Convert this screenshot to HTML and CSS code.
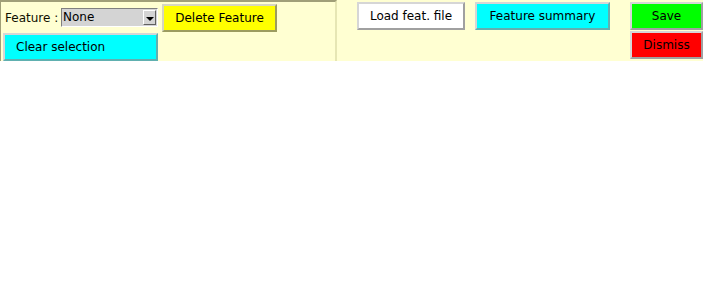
FILE: index.html
```html
<!DOCTYPE html>
<html>
<head>
<meta charset="utf-8">
<link rel="stylesheet" href="styles.css">
</head>
<body>
<div class="toolbar">
  <div class="panel">
    <div class="row row-top">
      <span class="label">Feature :</span>
      <div class="select">
        <span class="select-value">None</span>
        <span class="select-arrow"><span class="tri"></span></span>
      </div>
      <button class="btn btn-yellow btn-delete">Delete Feature</button>
    </div>
    <div class="row row-bottom">
      <button class="btn btn-cyan btn-clear">Clear selection</button>
    </div>
  </div>
  <button class="btn btn-white btn-load">Load feat. file</button>
  <button class="btn btn-cyan btn-summary">Feature summary</button>
  <div class="stack">
    <button class="btn btn-green btn-side">Save</button>
    <button class="btn btn-red btn-side">Dismiss</button>
  </div>
</div>
</body>
</html>
```
FILE: styles.css
```css
html, body {
  margin: 0;
  padding: 0;
  background: #ffffff;
}
body {
  font-family: "DejaVu Sans", sans-serif;
  font-size: 12px;
  color: #000;
}
.toolbar {
  display: flex;
  align-items: flex-start;
  width: 703px;
  height: 61px;
  background: #ffffd2;
}
.panel {
  box-sizing: border-box;
  width: 337px;
  height: 61px;
  border-style: solid;
  border-width: 2px 2px 0 1px;
  border-color: #a09f78 #e6e6b4 #e6e6b4 #a09f78;
  display: flex;
  flex-direction: column;
}
.row {
  display: flex;
  align-items: center;
}
.row-top {
  height: 31px;
  align-items: flex-start;
}
.label {
  width: 53px;
  margin-left: 4px;
  margin-top: 7px;
  line-height: 19px;
  color: #101000;
  white-space: nowrap;
}
.select {
  box-sizing: border-box;
  display: flex;
  align-items: stretch;
  width: 97px;
  height: 19px;
  margin-left: 3px;
  margin-top: 6px;
  background: #d4d4d4;
  border-style: solid;
  border-width: 1px;
  border-color: #808080 #ffffff #ffffff #808080;
}
.select-value {
  flex: 1;
  line-height: 17px;
  padding-left: 1px;
  color: #000;
}
.select-arrow {
  box-sizing: border-box;
  width: 13px;
  margin: 1px;
  background: #d4d4d4;
  border-style: solid;
  border-width: 1px;
  border-color: #ffffff #606060 #606060 #ffffff;
  display: flex;
  align-items: flex-end;
  justify-content: center;
  padding-bottom: 3px;
}
.tri {
  width: 0;
  height: 0;
  border-left: 4px solid transparent;
  border-right: 4px solid transparent;
  border-top: 4px solid #000;
}
.btn {
  box-sizing: border-box;
  height: 28px;
  padding: 0;
  margin: 0;
  font-family: "DejaVu Sans", sans-serif;
  font-size: 12px;
  color: #000;
  border-style: solid;
  border-width: 2px;
  border-color: #d6d6d6 #a0a0a0 #a0a0a0 #d6d6d6;
  text-align: center;
  line-height: 24px;
}
.btn-yellow { background: #ffff00; border-color: #d6d6c0 #9c9c60 #9c9c60 #d6d6c0; }
.btn-cyan { background: #00ffff; border-color: #d6d6d6 #60b0b0 #60b0b0 #d6d6d6; }
.btn-white { background: #ffffff; }
.btn-green { background: #00ff00; }
.btn-red { background: #ff0000; }
.btn-delete {
  width: 115px;
  margin-left: 4px;
  margin-top: 2px;
}
.row-bottom {
  height: 28px;
}
.btn-clear {
  width: 155px;
  margin-left: 2px;
  text-align: left;
  padding-left: 11px;
}
.btn-load {
  width: 108px;
  margin-left: 20px;
  margin-top: 2px;
}
.btn-summary {
  width: 135px;
  margin-left: 10px;
  margin-top: 2px;
}
.stack {
  display: flex;
  flex-direction: column;
  gap: 1px;
  margin-left: 20px;
  margin-top: 2px;
}
.btn-side {
  width: 73px;
}
```
